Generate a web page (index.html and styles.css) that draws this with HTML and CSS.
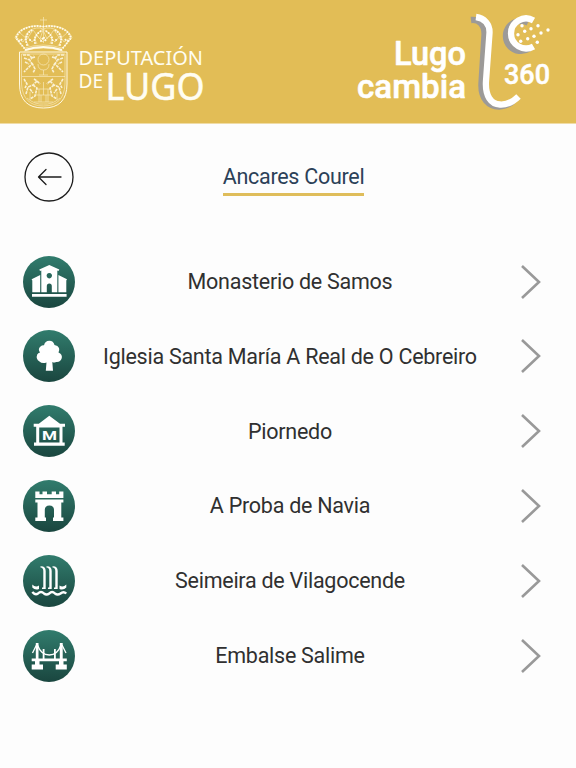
FILE: index.html
```html
<!DOCTYPE html>
<html lang="es">
<head>
    <meta charset="utf-8">
    <title>Ancares Courel</title>
    <link rel="stylesheet" href="styles.css">
</head>
<body>
    <header class="top-bar">
        <svg class="logo-deputacion" viewBox="0 0 196 100" role="img" aria-label="Deputación de Lugo">
            <!-- crown -->
            <g class="crest-line">
                <path d="M9 39 Q28 33 48 39 M10 36 Q28 30 47 36"/>
                <path d="M10 36 L0 26 Q2 19 10 16 Q20 12 28 15 Q37 12 47 16 Q55 19 57 26 L47 36"/>
                <path d="M14 34 Q7 25 14 19 Q22 14 28 17 Q35 14 43 19 Q50 25 43 34"/>
                <path d="M22 32 Q16 24 28 17 Q41 24 35 32 M28.500 5 V31 M25 8 H32"/>
                <path d="M2 26 L8 30 L12 24 L17 30 L22 24 L28 30 L34 24 L40 30 L45 24 L49 30 L55 26"/>
                <path d="M5 21 L12 27 L18 18 L25 27 L28 18 L32 27 L39 18 L45 27 L52 21"/>
            </g>
            <g class="crest-dots">
                <path d="M9 36 L1 26 Q3 20 9 17 Q17 13 28 14.500 Q40 13 48 17 Q54 20 56 26 L48 36"/>
                <path d="M12 33 Q8 22 19 17 M45 33 Q49 22 38 17 M20 31 Q18 24 26 19 M37 31 Q39 24 31 19"/>
                <path d="M4 29 L8 27 M53 29 L49 27 M26 29 L28.500 25 L31 29 M15 28 H17 M41 28 H43"/>
            </g>
            <path class="crest-band" d="M10 38 Q28 32 47 38"/>
            <!-- shield -->
            <path class="crest-shield" d="M4.500 40 H52 V72 Q52 96 28.500 96 Q4.500 96 4.500 72 Z"/>
            <path class="crest-line" d="M6.500 42 H50 V72 Q49 94 28.500 94 Q8 94 6.500 72 Z M7 64.500 H50"/>
            <g class="crest-line">
                <circle cx="28.500" cy="47.500" r="5.500"/>
                <path d="M23 52 Q23 58 28.500 58 Q34 58 34 52 M28.500 58 V63 M24 63 H33"/>
                <path d="M21 77 H36 M21 83 H36 M19 90 H38 M24 77 V90 M33 77 V90 M28.500 70 V83"/>
                <path d="M12 86 Q20 93 28.500 92 Q37 93 45 86 M15 80 V88 M42 80 V88 M26 83 V90 M31 83 V90"/>
            </g>
            <g class="crest-figure">
                <path d="M8 43 L14 43 L17 46 L20 45 M9 46 L15 48 L19 44 M14 47 L17 52 L13 56 L9 60 M17 51 L20 57 L18 61 M10 50 L14 52"/>
                <path d="M49 43 L43 43 L40 46 L37 45 M48 46 L42 48 L38 44 M43 47 L40 52 L44 56 L48 60 M40 51 L37 57 L39 61 M47 50 L43 52"/>
                <path d="M19 67 L22 69 L18 73 L13 75 L11 82 M18 73 L22 76 L20 84 L15 87 M9 67 L12 72 L10 76 M15 77 L18 81 M22 69 L25 72"/>
                <path d="M38 67 L35 69 L39 73 L44 75 L46 82 M39 73 L35 76 L37 84 L42 87 M48 67 L45 72 L47 76 M42 77 L39 81 M35 69 L32 72"/>
            </g>
            <text class="word-thin" x="63.500" y="53" textLength="124.500" lengthAdjust="spacingAndGlyphs">DEPUTACIÓN</text>
            <text class="word-thin" x="63.500" y="75.500" textLength="24.500" lengthAdjust="spacingAndGlyphs">DE</text>
            <text class="word-lugo" x="90.500" y="88.300" textLength="99" lengthAdjust="spacingAndGlyphs">LUGO</text>
        </svg>

        <svg class="logo-cambia" viewBox="0 0 200 104" role="img" aria-label="Lugo cambia 360">
            <text class="word-cambia" x="42" y="56.500" textLength="72" lengthAdjust="spacingAndGlyphs">Lugo</text>
            <text class="word-cambia" x="5" y="90" textLength="109" lengthAdjust="spacingAndGlyphs">cambia</text>
            <text class="word-360" x="152" y="75.500" textLength="46" lengthAdjust="spacingAndGlyphs">360</text>
            <g class="ribbon-shadow">
                <path d="M119 12 C127 11 133 17 132.500 27 L129.500 75 C128.500 91 137 98.500 147 98.500 Q156 98 161 93"/>
                <path d="M176 14.700 A15 15 0 1 0 177 40.600"/>
            </g>
            <g class="ribbon">
                <path d="M124 9 C132 10 138 16 137.500 25 L134 73 C133 88 139 96 148 96.500 Q158 97 166.500 88.500"/>
                <path d="M181.500 12.400 A15 15 0 1 0 181.500 38.400"/>
            </g>
            <g class="ribbon-dots">
                <circle cx="170" cy="17.700" r="1.700"/>
                <circle cx="186" cy="17.700" r="1.700"/>
                <circle cx="179" cy="20.700" r="1.700"/>
                <circle cx="196" cy="22" r="1.700"/>
                <circle cx="172.700" cy="23.300" r="1.700"/>
                <circle cx="189" cy="25" r="1.700"/>
                <circle cx="166" cy="26.700" r="1.700"/>
                <circle cx="182" cy="28.300" r="1.700"/>
                <circle cx="175.700" cy="30.700" r="1.700"/>
                <circle cx="168.700" cy="33.300" r="1.700"/>
                <circle cx="185.300" cy="34.300" r="1.700"/>
            </g>
        </svg>
    </header>

    <div class="title-row">
        <a class="back-button" href="#" aria-label="Volver">
            <svg viewBox="0 0 50 50">
                <circle cx="25" cy="25" r="24"/>
                <path d="M37 25 H15 M22 17.500 L14.500 25 L22 32.500"/>
            </svg>
        </a>
        <h1 class="title"><span>Ancares Courel</span></h1>
    </div>

    <ul class="place-list">
        <li class="place">
            <span class="place-icon">
                <svg viewBox="0 0 52 52">
                    <path fill-rule="evenodd" d="M26.300 9 L36.300 13.500 L35.500 15 L34.300 14.500 V36.300 H28.800 V30 A2.500 2.500 0 0 0 23.800 30 V36.300 H18.300 V14.500 L17 15 L16.300 13.500 Z M26.300 17 a2.700 2.700 0 1 0 .01 0 Z"/>
                    <path d="M17.200 19 V36.300 H9.300 V24.500 L8.600 23.300 Z M35.400 19 L44 23.300 L43.300 24.500 V36.300 H35.400 Z M9 38 H43.600 V40.700 H9 Z"/>
                </svg>
            </span>
            <span class="place-name">Monasterio de Samos</span>
            <svg class="chevron" viewBox="0 0 20 36"><path d="M1 2 L18 18 L1 34"/></svg>
        </li>
        <li class="place">
            <span class="place-icon">
                <svg viewBox="0 0 52 52">
                    <path d="M22.800 40.700 L23.500 32.500 Q19 34 16.500 31.500 Q12.500 29 14.200 24.500 Q15 23 17 22.500 Q14.500 19 17.500 16.500 Q19 15 21 15.200 Q22 10.700 26.300 10.700 Q30.500 10.700 31.500 15 Q35 15.500 36 18 Q36.800 20.500 35.500 22.500 Q39.500 24 38.800 28 Q37.500 32.500 33 32 Q31 33 29.300 32 L30 40.700 Z"/>
                </svg>
            </span>
            <span class="place-name">Iglesia Santa María A Real de O Cebreiro</span>
            <svg class="chevron" viewBox="0 0 20 36"><path d="M1 2 L18 18 L1 34"/></svg>
        </li>
        <li class="place">
            <span class="place-icon">
                <svg viewBox="0 0 52 52">
                    <path fill-rule="evenodd" d="M26.300 10.700 L37 18.800 H42 V21.700 H39.500 V37.500 H41.700 V40.700 H11 V37.500 H13.200 V21.700 H10.700 V18.800 H15.800 Z M16.200 22.500 V37.500 H36.500 V22.500 Z"/>
                    <text class="museum-letter" x="26.400" y="34.500" textLength="15" lengthAdjust="spacingAndGlyphs">M</text>
                </svg>
            </span>
            <span class="place-name">Piornedo</span>
            <svg class="chevron" viewBox="0 0 20 36"><path d="M1 2 L18 18 L1 34"/></svg>
        </li>
        <li class="place">
            <span class="place-icon">
                <svg viewBox="0 0 52 52">
                    <path d="M12.300 11.500 H16.500 V14.200 H19.500 V11.500 H24 V14.200 H28.700 V11.500 H33 V14.200 H36.200 V11.500 H40.400 V18 H12.300 Z"/>
                    <path d="M12.300 19.500 H40.400 V22.500 H38.300 V37.500 H40.400 V41 H30 V37.500 H31 V30 Q31 25.500 26.400 25.500 Q21.800 25.500 21.800 30 V37.500 H23 V41 H12.300 V37.500 H14.500 V22.500 H12.300 Z"/>
                </svg>
            </span>
            <span class="place-name">A Proba de Navia</span>
            <svg class="chevron" viewBox="0 0 20 36"><path d="M1 2 L18 18 L1 34"/></svg>
        </li>
        <li class="place">
            <span class="place-icon">
                <svg viewBox="0 0 52 52">
                    <path d="M17.500 11.300 Q22.700 11 22.700 16 V34 H19 V32.500 H20.300 V16 Q20.300 12.700 17.500 12.500 Z M23.500 11.300 Q28.700 11 28.700 16 V34 H25 V32.500 H26.300 V16 Q26.300 12.700 23.500 12.500 Z M29.500 11.300 Q34.700 11 34.700 16 V34 H31 V32.500 H32.300 V16 Q32.300 12.700 29.500 12.500 Z"/>
                    <path d="M9.300 29.500 Q12.500 33 16 30.500 V34 Q12 35.500 9.300 32.500 Z M43.300 29.500 Q40 33 36.500 30.500 V34 Q40.500 35.500 43.300 32.500 Z"/>
                    <path class="wave" d="M9.300 37 Q12.300 40.500 15 38.500 Q18 35.500 21 38.500 Q23.500 40.500 26.300 38.500 Q29 35.500 32 38.500 Q34.500 40.500 37.500 38.500 Q40.500 35.800 43.300 38.500"/>
                </svg>
            </span>
            <span class="place-name">Seimeira de Vilagocende</span>
            <svg class="chevron" viewBox="0 0 20 36"><path d="M1 2 L18 18 L1 34"/></svg>
        </li>
        <li class="place">
            <span class="place-icon">
                <svg viewBox="0 0 52 52">
                    <path d="M12.800 13 H15.500 V28.500 H36.800 V13 H39.700 V28.500 H43.800 V31.200 H40.500 V34.500 H43.800 V39.500 H32.700 V34.500 H36 V31.200 H16.500 V34.500 H20 V39.500 H8.700 V34.500 H12 V31.200 H8.700 V28.500 H12.800 Z"/>
                    <path d="M19.700 19 H21.500 V29 H19.700 Z M31 19 H32.800 V29 H31 Z"/>
                    <path class="cable" d="M14.500 15 Q18 25 26.300 25 Q34.500 25 38 15 M9.500 23 L13.500 15 M43 23 L39 15"/>
                </svg>
            </span>
            <span class="place-name">Embalse Salime</span>
            <svg class="chevron" viewBox="0 0 20 36"><path d="M1 2 L18 18 L1 34"/></svg>
        </li>
    </ul>
</body>
</html>
```

FILE: styles.css
```css
body {
    margin: 0;
    min-height: 100vh;
    background-color: #fdfdfd;
    font-family: Roboto, sans-serif;
    color: #303030;
    overflow: hidden;
}

/* Header with both logos */
.top-bar {
    display: flex;
    justify-content: space-between;
    align-items: flex-start;
    height: 124px;
    padding: 12px 24px 0 15px;
    box-sizing: border-box;
    background-color: #e2bd56;
    border-bottom: 1px solid #f0dca6;
}

.logo-deputacion {
    width: 196px;
    height: 100px;
    fill: #fffdf2;
    overflow: visible;
}

.logo-cambia {
    width: 200px;
    height: 104px;
    margin-top: -4px;
    fill: #fff;
}

.crest-line {
    fill: none;
    stroke: #fff6d8;
    stroke-width: 0.7;
    opacity: 0.75;
}

.crest-dots {
    fill: none;
    stroke: #fffbea;
    stroke-width: 2;
    stroke-linecap: round;
    stroke-dasharray: 0.1 2.7;
}

.crest-band {
    fill: none;
    stroke: #fffbea;
    stroke-width: 2;
}

.crest-shield {
    fill: none;
    stroke: #fff8e0;
    stroke-width: 1;
}

.crest-figure {
    fill: none;
    stroke: #fffbea;
    stroke-width: 1.6;
    stroke-dasharray: 3 0.8;
    opacity: 0.85;
}

.word-thin {
    font-family: "Noto Sans", sans-serif;
    font-size: 19px;
}

.word-lugo {
    font-family: "Noto Sans", sans-serif;
    font-size: 37.5px;
    stroke: #fffdf2;
    stroke-width: 0.5;
}

.word-cambia {
    font-family: Roboto, sans-serif;
    font-weight: 500;
    font-size: 34px;
    stroke: #fff;
    stroke-width: 0.6;
    stroke-linejoin: round;
}

.word-360 {
    font-family: Roboto, sans-serif;
    font-weight: 500;
    font-size: 27px;
    stroke: #fff;
    stroke-width: 0.5;
    stroke-linejoin: round;
}

.ribbon,
.ribbon-shadow {
    fill: none;
    stroke: #fff;
    stroke-width: 6.3;
}

.ribbon-shadow {
    stroke: #9c9a98;
}

/* Back button and section title */
.title-row {
    display: grid;
    grid-template-columns: 50px 1fr;
    align-items: center;
    padding: 27.5px 63px 0 24px;
}

.back-button {
    display: block;
    height: 50px;
}

.back-button svg {
    display: block;
    width: 50px;
    height: 50px;
    fill: none;
    stroke: #1c1c1c;
    stroke-width: 1.3;
    stroke-linecap: round;
    stroke-linejoin: round;
}

.title {
    margin: 0;
    padding-top: 5px;
    text-align: center;
    font-size: 21.5px;
    letter-spacing: -0.28px;
    font-weight: 400;
    color: #2c4158;
}

.title span {
    display: inline-block;
    line-height: 30px;
    padding-bottom: 1px;
    border-bottom: 3px solid #dfbd5b;
}

/* List of places */
.place-list {
    list-style: none;
    margin: 0;
    padding: 42.7px 35px 0 23px;
}

.place {
    display: grid;
    grid-template-columns: 52px 1fr 36px;
    align-items: center;
    height: 74.8px;
}

.place-icon {
    width: 52px;
    height: 52px;
    border-radius: 50%;
    background: linear-gradient(180deg, #317c6d 0%, #1a463f 100%);
}

.place-icon svg {
    display: block;
    width: 52px;
    height: 52px;
    fill: #fff;
}

.place-icon .wave {
    fill: none;
    stroke: #fff;
    stroke-width: 2.4;
}

.place-icon .cable {
    fill: none;
    stroke: #fff;
    stroke-width: 1.3;
}

.museum-letter {
    font-family: Roboto, sans-serif;
    font-weight: 700;
    font-size: 13px;
    text-anchor: middle;
}

.place-name {
    text-align: center;
    white-space: nowrap;
    font-size: 21.5px;
    letter-spacing: -0.26px;
}

.chevron {
    justify-self: end;
    width: 20px;
    height: 36px;
    fill: none;
    stroke: #999;
    stroke-width: 2.6;
}
```
